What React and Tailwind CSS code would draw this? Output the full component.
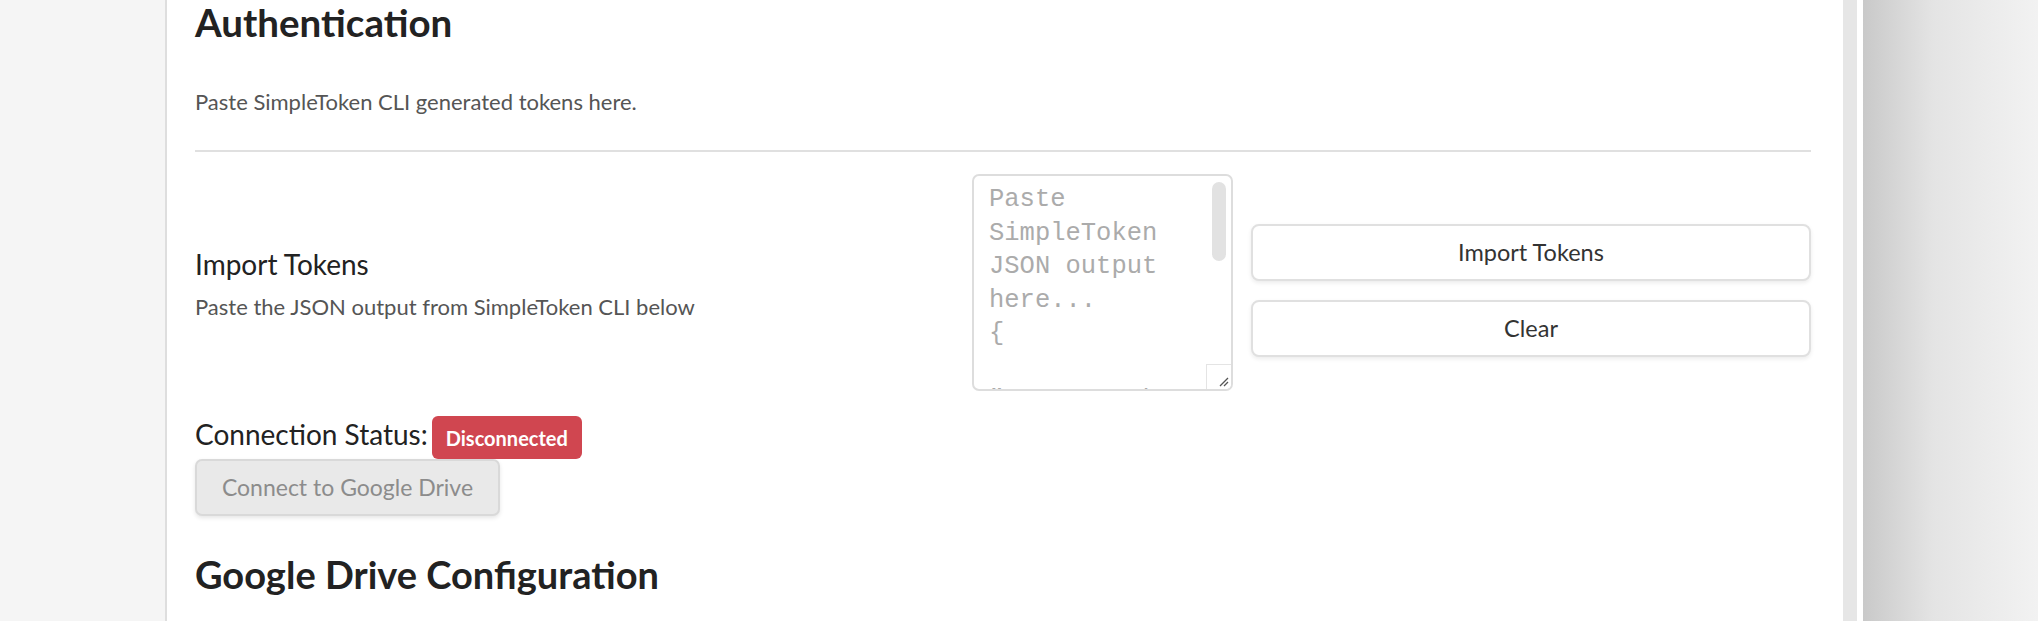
import React from 'react';

const placeholderLines = ['Paste', 'SimpleToken', 'JSON output', 'here...', '{', '', '"access_token'];

export default function App() {
  return (
    <div className="flex h-[621px] w-[2038px] overflow-hidden bg-[#f5f5f5] font-['Lato',sans-serif]">
      {/* left gutter */}
      <div className="w-[165px] shrink-0 bg-[#f5f5f5]" />

      {/* Settings card */}
      <div className="w-[1678px] shrink-0 border-l-2 border-[#dedede] bg-white pl-[28px] pr-[32px]">
        <h2 className="-mt-px text-[38.5px] font-bold leading-[46px] text-[#222]">Authentication</h2>
        <p className="mt-[42px] text-[22px] leading-[30px] text-[#555]">
          Paste SimpleToken CLI generated tokens here.
        </p>
        <div className="mt-[33px] h-[2px] bg-[#e0e0e0]" />

        {/* Import tokens row */}
        <div className="mt-[22px] flex h-[217px]">
          <div className="flex-1 pt-[72px]">
            <div className="text-[28px] leading-[36px] text-[#222]">Import Tokens</div>
            <div className="mt-[10px] text-[22px] leading-[30px] text-[#555]">
              Paste the JSON output from SimpleToken CLI below
            </div>
          </div>
          <div className="flex w-[839px] gap-[18px]">
            <div className="relative h-[217px] w-[261px] shrink-0 overflow-hidden rounded-[7px] border-2 border-[#dddddd] bg-white pl-[15px] pt-[7px] font-['Liberation_Mono',monospace] text-[25.5px] leading-[33.5px] text-[#ababab]">
              {placeholderLines.map((l, i) => (
                <div key={i} className="h-[33.5px] whitespace-pre">{l}</div>
              ))}
              <div className="absolute right-[5px] top-[6px] h-[79px] w-[14px] rounded-full bg-[#e2e2e2]" />
              <div className="absolute bottom-0 right-0 h-[25px] w-[25px] border-l border-t border-[#e4e4e4] bg-white">
                <svg width="25" height="25" viewBox="0 0 25 25" className="block">
                  <path d="M21 13 L13 21 M21 17 L17 21" stroke="#555" strokeWidth="1.3" />
                </svg>
              </div>
            </div>
            <div className="flex flex-1 flex-col gap-[19px] pt-[50px]">
              <button className="h-[57px] w-full rounded-[8px] border-2 border-[#e0e0e0] bg-white text-[23.5px] text-[#333] shadow-[0_2px_4px_rgba(0,0,0,0.08)]">
                Import Tokens
              </button>
              <button className="h-[57px] w-full rounded-[8px] border-2 border-[#e0e0e0] bg-white text-[23.5px] text-[#333] shadow-[0_2px_4px_rgba(0,0,0,0.08)]">
                Clear
              </button>
            </div>
          </div>
        </div>

        {/* Connection status */}
        <div className="mt-[25px] flex items-start gap-[4px]">
          <span className="text-[28px] leading-[36px] text-[#222]">Connection Status:</span>
          <span className="flex h-[43px] items-center rounded-[6px] bg-[#d04650] px-[14px] text-[20px] font-bold text-white">
            Disconnected
          </span>
        </div>
        <button
          disabled
          className="flex h-[57px] w-[305px] items-center justify-center rounded-[7px] border-2 border-[#d9d9d9] bg-[#e9e9e9] text-[23px] text-[#8c8c8c] shadow-[0_2px_4px_rgba(0,0,0,0.1)]"
        >
          Connect to Google Drive
        </button>

        <h2 className="mt-[35px] text-[38px] font-bold leading-[46px] text-[#222]">Google Drive Configuration</h2>
      </div>

      {/* scrollbar track + page edge */}
      <div className="w-[14px] shrink-0 bg-[#e6e6e6]" />
      <div className="w-[6px] shrink-0 bg-white" />
      <div className="flex-1 bg-linear-to-r from-[#c9c9c9] via-[#e4e4e4] via-40% to-[#f2f2f2]" />
    </div>
  );
}
